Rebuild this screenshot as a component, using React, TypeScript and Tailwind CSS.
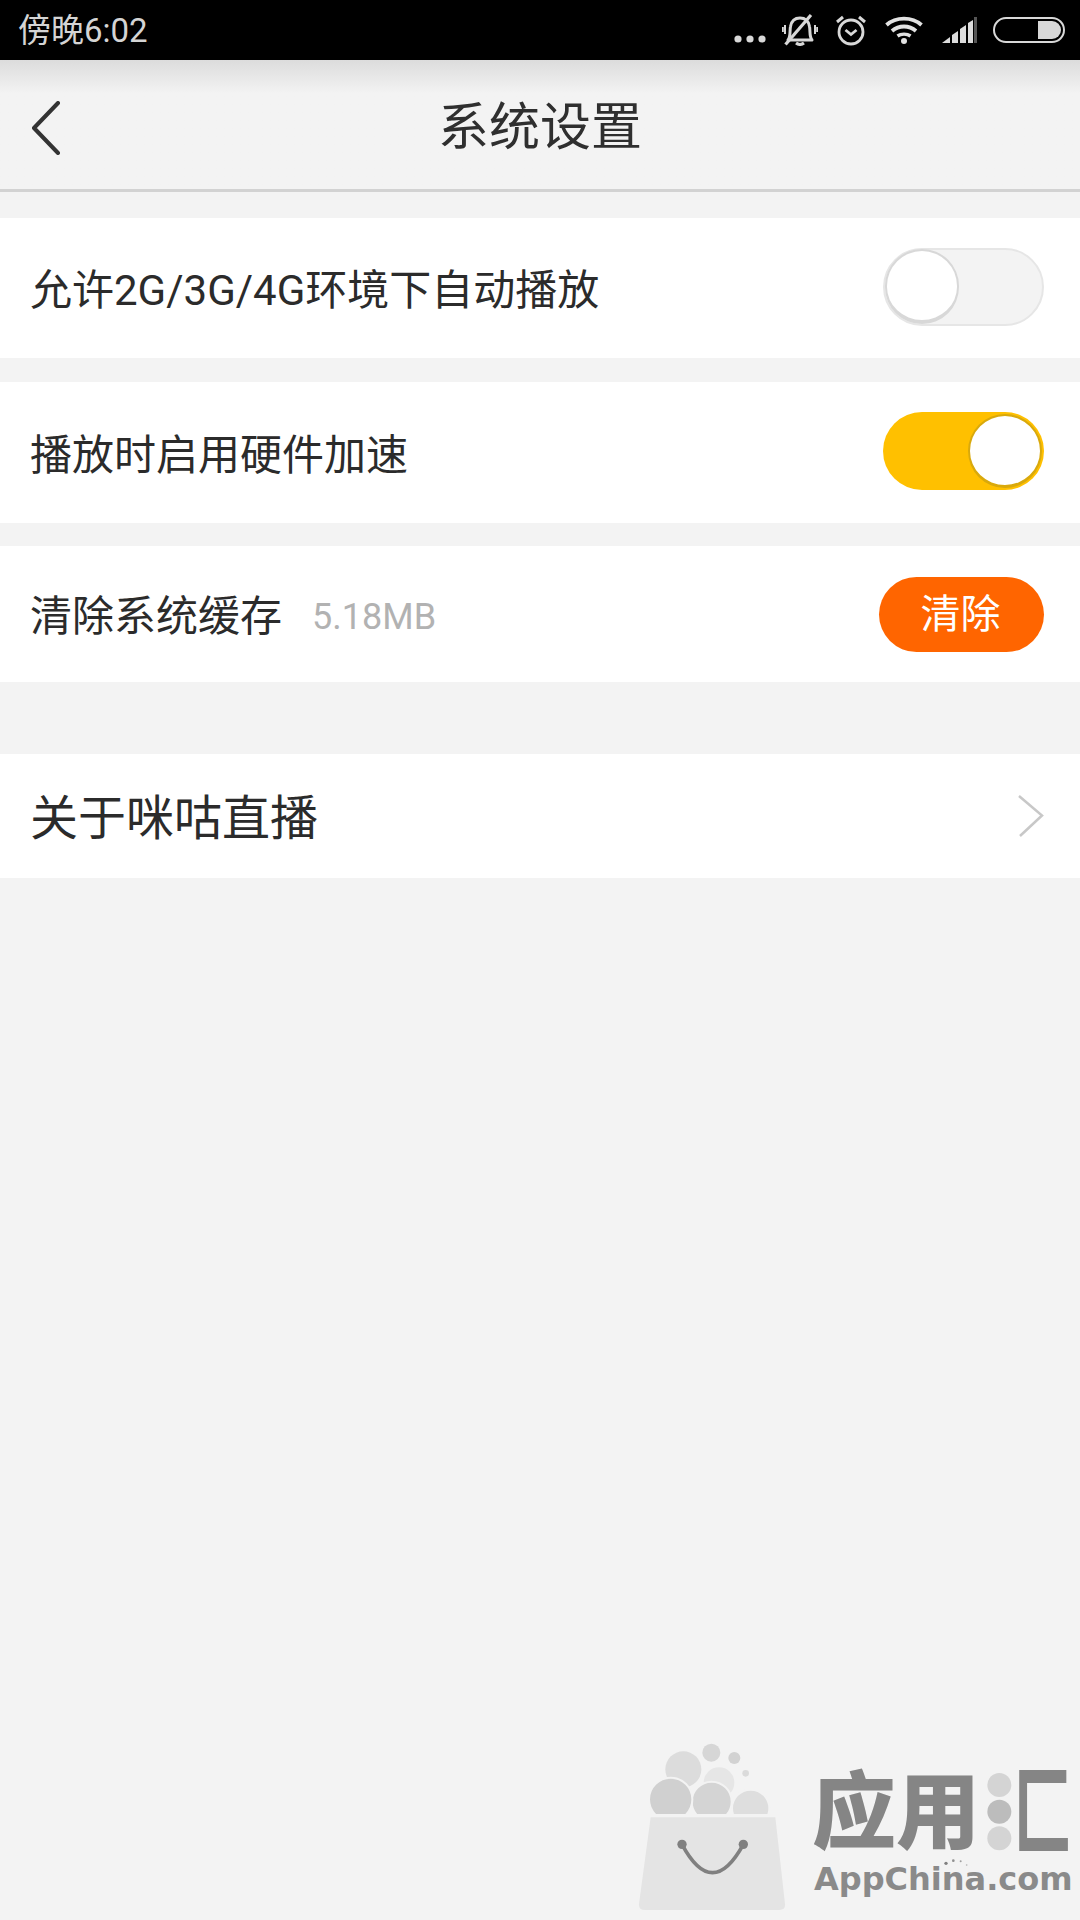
const font = { fontFamily: '"Roboto", "Noto Sans CJK SC", sans-serif' };

function StatusIcons() {
  return (
    <div className="flex items-center pr-[15px]">
      <svg width="32" height="8" viewBox="0 0 32 8" className="mt-[18px]">
        <circle cx="4" cy="4" r="3.6" fill="#d8d8d8" />
        <circle cx="16" cy="4" r="3.6" fill="#d8d8d8" />
        <circle cx="28" cy="4" r="3.6" fill="#d8d8d8" />
      </svg>
      <svg width="36" height="32" viewBox="0 0 36 32" className="ml-[16px]" fill="none" stroke="#d8d8d8">
        <path d="M6 26 C9 22 7.500 17 8.500 12.500 C9.500 7 13 4 18 4 C23 4 26.500 7 27.500 12.500 C28.500 17 27 22 30 26 Z" strokeWidth="3" strokeLinejoin="round" />
        <path d="M14 29 Q18 32 22 29" strokeWidth="3" />
        <path d="M3.500 30.500 L29 1" strokeWidth="3.200" />
        <path d="M3 11 V20 M0.800 13 V18 M33 11 V20 M35.200 13 V18" strokeWidth="2" />
      </svg>
      <svg width="32" height="32" viewBox="0 0 32 32" className="ml-[17px]" fill="none" stroke="#d8d8d8">
        <circle cx="16" cy="18" r="12" strokeWidth="2.800" />
        <path d="M10.500 16 L16 20.500 L21.500 16" strokeWidth="2.800" />
        <path d="M2 8 L8 3 M30 8 L24 3" strokeWidth="3" />
      </svg>
      <svg width="38" height="28" viewBox="0 0 38 28" className="ml-[18px]" fill="none" stroke="#e2e2e2">
        <path d="M1.500 9 C11 0.500 27 0.500 36.500 9" strokeWidth="3.800" />
        <path d="M7 15 C14 9 24 9 31 15" strokeWidth="3.800" />
        <path d="M12.500 20 C16 17.500 22 17.500 25.500 20" strokeWidth="3.400" />
        <circle cx="19" cy="25" r="3" fill="#e2e2e2" stroke="none" />
      </svg>
      <svg width="35" height="26" viewBox="0 0 35 26" className="ml-[19px]">
        <path d="M0 26 L8 20 V26 Z" fill="#dcdcdc" />
        <path d="M10 26 V18 L16 14 V26 Z" fill="#dcdcdc" />
        <path d="M18 26 V12 L24 8 V26 Z" fill="#dcdcdc" />
        <path d="M26 26 V6 L31 3 V26 Z" fill="#dcdcdc" />
        <rect x="32" y="0" width="3" height="26" fill="#555555" />
      </svg>
      <svg width="72" height="26" viewBox="0 0 72 26" className="ml-[16px]">
        <rect x="1" y="1" width="70" height="24" rx="12" fill="none" stroke="#d8d8d8" strokeWidth="2" />
        <path d="M45 4 H59 A9 9 0 0 1 59 22 H45 Z" fill="#d8d8d8" />
      </svg>
    </div>
  );
}

function Row({ top, height, children }: { top: string; height: string; children: React.ReactNode }) {
  return <div className={`flex items-center justify-between bg-white pl-[30px] pr-[36px] ${top} ${height}`}>{children}</div>;
}

export default function App() {
  return (
    <div className="relative flex h-[1920px] w-[1080px] flex-col overflow-hidden bg-[#f3f3f3]" style={font}>
      <div className="flex h-[60px] shrink-0 items-center justify-between bg-black">
        <span className="pl-[18px] text-[33px] leading-none text-[#d4d4d4]">傍晚6:02</span>
        <StatusIcons />
      </div>

      <div className="relative flex h-[132px] shrink-0 items-center justify-center border-b-[3px] border-[#d2d2d2] bg-gradient-to-b from-[#dcdcdc] via-[#f3f3f3] via-[26%] to-[#f3f3f3]">
        <svg width="30" height="54" viewBox="0 0 30 54" className="absolute left-[31px] top-[41px]" fill="none" stroke="#333333" strokeWidth="4" strokeLinecap="round" strokeLinejoin="round">
          <path d="M27 2 L3 27 L27 52" />
        </svg>
        <span className="pt-[6px] text-[51px] leading-none text-[#2f2f2f]">系统设置</span>
      </div>

      <Row top="mt-[26px]" height="h-[140px]">
        <span className="pt-[6px] text-[42px] leading-none text-[#2b2b2b]">允许2G/3G/4G环境下自动播放</span>
        <div className="relative mb-[2px] h-[78px] w-[161px] rounded-full border-2 border-[#e6e6e6] bg-[#f3f3f3]">
          <div className="absolute left-[0px] top-[-1px] h-[75px] w-[74px] rounded-full border-2 border-b-[4px] border-[#d8d8d8] bg-white" />
        </div>
      </Row>

      <Row top="mt-[24px]" height="h-[141px]">
        <span className="pt-[6px] text-[42px] leading-none text-[#2b2b2b]">播放时启用硬件加速</span>
        <div className="relative mb-[3px] h-[78px] w-[161px] rounded-full bg-[#ffc000]">
          <div className="absolute right-[2px] top-[2px] h-[74px] w-[74px] rounded-full border-2 border-b-[3px] border-[#d9a90c] bg-white" />
        </div>
      </Row>

      <Row top="mt-[23px]" height="h-[136px]">
        <div className="flex items-center pt-[6px]">
          <span className="text-[42px] leading-none text-[#2b2b2b]">清除系统缓存</span>
          <span className="ml-[30px] text-[36px] leading-none text-[#b2b2b2]">5.18MB</span>
        </div>
        <div className="flex h-[75px] w-[165px] items-center justify-center rounded-full bg-[#ff6500] pt-[2px] pr-[2px] text-[40px] leading-none text-white">清除</div>
      </Row>

      <Row top="mt-[72px]" height="h-[124px]">
        <span className="pt-[6px] text-[48px] leading-none text-[#2b2b2b]">关于咪咕直播</span>
        <svg width="26" height="42" viewBox="0 0 26 42" fill="none" stroke="#c8c8c8" strokeWidth="2.500">
          <path d="M1 1 L24 20.500 L2 41" />
        </svg>
      </Row>

      <div className="absolute bottom-0 right-0 h-[190px] w-[460px]">
        <svg width="460" height="190" viewBox="0 0 1380 570" className="absolute left-0 top-0">
          <defs>
            <clipPath id="top">
              <rect x="0" y="0" width="600" height="252" />
            </clipPath>
          </defs>
          <g clipPath="url(#top)" stroke="#f3f3f3" strokeWidth="6">
            <circle cx="190" cy="118" r="54" fill="#dcdcdc" stroke="none" />
            <circle cx="274" cy="68" r="27" fill="#d6d6d6" stroke="none" />
            <circle cx="343" cy="84" r="18" fill="#d2d2d2" stroke="none" />
            <circle cx="377" cy="130" r="10" fill="#dadada" stroke="none" />
            <circle cx="297" cy="158" r="46" fill="#e6e6e6" stroke="none" />
            <circle cx="392" cy="235" r="56" fill="#dedede" />
            <circle cx="275" cy="215" r="60" fill="#d4d4d4" />
            <circle cx="152" cy="208" r="65" fill="#d0d0d0" />
          </g>
          <path d="M92 262 H466 L495 522 Q497 540 478 540 H75 Q55 540 57 522 Z" fill="#e4e4e4" />
          <path d="M186 343 Q277 513 370 343" fill="none" stroke="#808080" strokeWidth="11" />
          <circle cx="186" cy="343" r="14" fill="#808080" />
          <circle cx="370" cy="343" r="14" fill="#808080" />
          <circle cx="1138" cy="165" r="36" fill="#d4d4d4" />
          <circle cx="1138" cy="245" r="36" fill="#bcbcbc" />
          <circle cx="1138" cy="325" r="36" fill="#d4d4d4" />
          <circle cx="978" cy="400" r="5" fill="#808080" />
          <circle cx="1000" cy="392" r="4" fill="#909090" />
          <circle cx="1022" cy="394" r="3" fill="#a0a0a0" />
          <circle cx="1040" cy="405" r="2.500" fill="#b0b0b0" />
        </svg>
        <span className="absolute left-[192px] top-[42px] text-[84px] font-black leading-none text-[#858585]">应用</span>
        <span className="absolute left-[394px] top-[35px] origin-left scale-x-[0.6] text-[96px] font-black leading-none text-[#858585]">匚</span>
        <span className="absolute left-[194px] top-[133px] text-[32px] font-bold leading-none text-[#8a8a8a]" style={{ fontFamily: '"DejaVu Sans", sans-serif' }}>AppChina.com</span>
      </div>
    </div>
  );
}
